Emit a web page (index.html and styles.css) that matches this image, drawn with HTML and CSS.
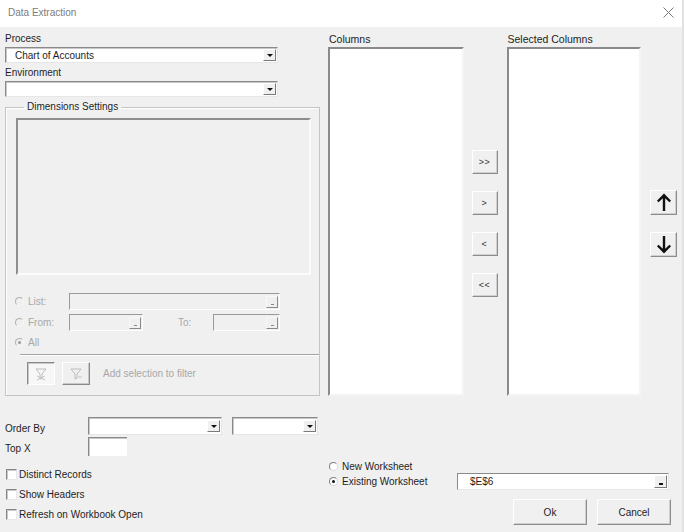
FILE: index.html
```html
<!DOCTYPE html>
<html lang="en">
<head>
    <meta charset="UTF-8">
    <title>Data Extraction</title>
    <link rel="stylesheet" href="styles.css">
</head>
<body>
<div class="window">
    <div class="titlebar">
        <span class="title">Data Extraction</span>
        <svg class="close" width="11" height="11" viewBox="0 0 11 11"><path d="M0.5 0.5 L10.5 10.5 M10.5 0.5 L0.5 10.5" stroke="#7a7a7a" stroke-width="1" fill="none"/></svg>
    </div>

    <div class="content">
        <div class="top">
            <div class="left">
                <div class="lbl">Process</div>
                <div class="combo"><span class="value">Chart of Accounts</span><span class="drop"><i></i></span></div>
                <div class="lbl lbl-env">Environment</div>
                <div class="combo"><span class="value"></span><span class="drop"><i></i></span></div>

                <fieldset class="dims">
                    <legend>Dimensions Settings</legend>
                    <div class="dim-list"></div>

                    <div class="dim-row row-list">
                        <span class="opt"><span class="radio off"></span>List:</span>
                        <span class="dbox box-list"><span class="dots"></span></span>
                    </div>
                    <div class="dim-row row-from">
                        <span class="opt"><span class="radio off"></span>From:</span>
                        <span class="dbox box-from"><span class="dots"></span></span>
                        <span class="to-lbl">To:</span>
                        <span class="dbox box-to"><span class="dots"></span></span>
                    </div>
                    <div class="dim-row row-all">
                        <span class="opt"><span class="radio off on"></span>All</span>
                    </div>

                    <div class="sep"></div>

                    <div class="filter-row">
                        <span class="fbtn pressed">
                            <svg width="14" height="14" viewBox="0 0 14 14"><path d="M2 2 H12 L8 7 V11 L6 12 V7 Z" fill="none" stroke="#bcbcbc" stroke-width="1"/><path d="M3 9 L11 13 M3 13 L11 9" stroke="#c4c4c4" stroke-width="1"/></svg>
                        </span>
                        <span class="fbtn">
                            <svg width="14" height="14" viewBox="0 0 14 14"><path d="M2 2 H12 L8 7 V11 L6 12 V7 Z" fill="none" stroke="#bcbcbc" stroke-width="1"/><path d="M9 10 H13" stroke="#c4c4c4" stroke-width="1"/></svg>
                        </span>
                        <span class="filter-text">Add selection to filter</span>
                    </div>
                </fieldset>
            </div>

            <div class="col-box">
                <div class="col-title">Columns</div>
                <div class="listbox"></div>
            </div>

            <div class="move-btns">
                <span class="btn small">&gt;&gt;</span>
                <span class="btn small">&gt;</span>
                <span class="btn small">&lt;</span>
                <span class="btn small">&lt;&lt;</span>
            </div>

            <div class="col-box sel">
                <div class="col-title">Selected Columns</div>
                <div class="listbox"></div>
            </div>

            <div class="order-btns">
                <span class="btn arrow">
                    <svg width="16" height="19" viewBox="0 0 16 19"><path d="M8 18 V2.5 M1.8 8.5 L8 2.3 L14.2 8.5" fill="none" stroke="#111" stroke-width="2.4"/></svg>
                </span>
                <span class="btn arrow">
                    <svg width="16" height="19" viewBox="0 0 16 19"><path d="M8 1 V16.5 M1.8 10.5 L8 16.7 L14.2 10.5" fill="none" stroke="#111" stroke-width="2.4"/></svg>
                </span>
            </div>
        </div>

        <div class="bottom">
            <div class="bottom-left">
                <div class="form-row">
                    <span class="row-lbl">Order By</span>
                    <div class="combo order1"><span class="value"></span><span class="drop"><i></i></span></div>
                    <div class="combo order2"><span class="value"></span><span class="drop"><i></i></span></div>
                </div>
                <div class="form-row topx-row">
                    <span class="row-lbl">Top X</span>
                    <span class="topx"></span>
                </div>
                <div class="checks">
                    <div class="check-row"><span class="checkbox"></span>Distinct Records</div>
                    <div class="check-row"><span class="checkbox"></span>Show Headers</div>
                    <div class="check-row"><span class="checkbox"></span>Refresh on Workbook Open</div>
                </div>
            </div>

            <div class="bottom-right">
                <div class="ws-row"><span class="radio"></span>New Worksheet</div>
                <div class="ws-row existing">
                    <span class="ws-opt"><span class="radio on"></span>Existing Worksheet</span>
                    <span class="refbox"><span class="value">$E$6</span><span class="refbtn"><i></i></span></span>
                </div>
                <div class="actions">
                    <span class="btn big">Ok</span>
                    <span class="btn big">Cancel</span>
                </div>
            </div>
        </div>
    </div>
</div>
</body>
</html>
```

FILE: styles.css
```css
* {
    box-sizing: border-box;
}
body {
    margin: 0;
    font-family: "Liberation Sans", Arial, sans-serif;
    font-size: 10px;
    color: #1e1e1e;
    background-color: #fff;
}
.window {
    width: 684px;
    height: 532px;
    background-color: #f0f0f0;
    border-right: 2px solid #e2e2e2;
}
.titlebar {
    height: 27px;
    background-color: #fff;
    display: flex;
    align-items: center;
    justify-content: space-between;
    padding: 0 8px 2px 8px;
}
.title {
    font-size: 10px;
    color: #7c7c7c;
}
.content {
    padding: 0 5px;
}
.top {
    display: flex;
    align-items: flex-start;
    padding-top: 6px;
}

/* left column */
.left {
    width: 315px;
}
.lbl {
    height: 14px;
    line-height: 12px;
}
.lbl-env {
    height: 18px;
    line-height: 19px;
}
.combo {
    display: flex;
    align-items: center;
    height: 16px;
    background-color: #fff;
    border: 1px solid;
    border-color: #8a8a8a #e6e6e6 #e6e6e6 #8a8a8a;
    box-shadow: inset 1px 1px 0 #c8c8c8;
    width: 273px;
}
.combo .value {
    flex: 1;
    padding-left: 9px;
}
.drop {
    width: 13px;
    height: 12px;
    margin-right: 1px;
    background-color: #f0f0f0;
    border: 1px solid;
    border-color: #fff #7a7a7a #7a7a7a #fff;
    display: flex;
    align-items: center;
    justify-content: center;
}
.drop i {
    width: 0;
    height: 0;
    border-left: 3px solid transparent;
    border-right: 3px solid transparent;
    border-top: 3px solid #111;
}

.dims {
    margin: 4px 0 0 0;
    padding: 5px 0 10px 10px;
    width: 315px;
    border: 1px solid #c4c4c4;
    box-shadow: inset 1px 1px 0 #fff;
    min-width: 0;
}
.dims legend {
    margin-left: 8px;
    padding: 0 3px;
    line-height: 12px;
}
.dim-list {
    width: 295px;
    height: 157px;
    background-color: #f0f0f0;
    border: 2px solid;
    border-color: #8e8e8e #fbfbfb #fbfbfb #8e8e8e;
}
.dim-row {
    display: flex;
    align-items: center;
    color: #a8a8a8;
}
.row-list {
    margin-top: 18px;
}
.row-from {
    margin-top: 4px;
}
.row-all {
    margin-top: 5px;
    height: 12px;
}
.opt {
    width: 53px;
    display: flex;
    align-items: center;
}
.dbox {
    height: 17px;
    border: 1px solid;
    border-color: #9a9a9a #fff #fff #9a9a9a;
    display: flex;
    justify-content: flex-end;
    align-items: flex-end;
    padding: 0 1px 1px 0;
}
.box-list {
    width: 211px;
}
.box-from {
    width: 74px;
}
.box-to {
    width: 67px;
}
.to-lbl {
    width: 70px;
    padding-left: 35px;
}
.dots {
    width: 12px;
    height: 12px;
    border: 1px solid;
    border-color: #f8f8f8 #8a8a8a #8a8a8a #f8f8f8;
    position: relative;
}
.dots::after {
    content: "";
    position: absolute;
    left: 4px;
    bottom: 2px;
    width: 3px;
    height: 1px;
    background-color: #888;
}
.sep {
    margin: 6px 0 0 4px;
    width: 299px;
    height: 2px;
    border-top: 1px solid #a4a4a4;
    border-bottom: 1px solid #fff;
}
.filter-row {
    display: flex;
    align-items: center;
    margin: 6px 0 0 11px;
}
.fbtn {
    width: 28px;
    height: 23px;
    margin-right: 7px;
    display: flex;
    align-items: center;
    justify-content: center;
    border: 1px solid;
    border-color: #fff #8a8a8a #8a8a8a #fff;
    box-shadow: inset -1px -1px 0 #c8c8c8;
}
.fbtn.pressed {
    border-color: #8a8a8a #fff #fff #8a8a8a;
    box-shadow: inset 1px 1px 0 #c8c8c8;
    background-color: #f7f7f7;
}
.filter-text {
    margin-left: 6px;
    color: #a8a8a8;
}

/* radios and checks */
.radio {
    width: 9px;
    height: 9px;
    border-radius: 50%;
    border: 1px solid;
    border-color: #808080 #dcdcdc #dcdcdc #808080;
    background-color: #fff;
    margin-right: 4px;
    display: inline-flex;
    align-items: center;
    justify-content: center;
    flex-shrink: 0;
}
.radio.on::after {
    content: "";
    width: 3px;
    height: 3px;
    border-radius: 50%;
    background-color: #111;
}
.radio.off {
    border-color: #b0b0b0 #f6f6f6 #f6f6f6 #b0b0b0;
    background-color: #f0f0f0;
    margin: 0 4px 0 -1px;
}
.radio.off.on::after {
    background-color: #9a9a9a;
}

/* list columns */
.col-box {
    width: 136px;
    margin-left: 8px;
}
.col-box.sel {
    width: 135px;
    margin-left: 9px;
}
.col-title {
    font-size: 10.5px;
    height: 14px;
    line-height: 12px;
    padding-left: 1px;
    color: #222;
}
.listbox {
    height: 349px;
    background-color: #fff;
    border: 2px solid;
    border-color: #8a8a8a #f4f4f4 #f4f4f4 #8a8a8a;
}
.move-btns {
    display: flex;
    flex-direction: column;
    gap: 17px;
    margin: 117px 0 0 8px;
}
.order-btns {
    display: flex;
    flex-direction: column;
    gap: 17px;
    margin: 157px 0 0 9px;
}
.btn {
    display: flex;
    align-items: center;
    justify-content: center;
    background-color: #f0f0f0;
    border: 1px solid;
    border-color: #fff #8c8c8c #8c8c8c #fff;
    box-shadow: inset -1px -1px 0 #d0d0d0;
}
.btn.small {
    width: 26px;
    height: 24px;
    font-size: 9px;
    color: #333;
    letter-spacing: 0.5px;
}
.btn.arrow {
    width: 27px;
    height: 25px;
}
.btn.big {
    width: 74px;
    height: 26px;
}

/* bottom */
.bottom {
    display: flex;
    align-items: flex-start;
    margin-top: 21px;
}
.bottom-left {
    width: 324px;
}
.form-row {
    display: flex;
    align-items: center;
    height: 18px;
}
.row-lbl {
    width: 83px;
    padding-top: 4px;
}
.combo.order1 {
    width: 134px;
    height: 18px;
    margin-right: 10px;
}
.combo.order2 {
    width: 86px;
    height: 18px;
}
.topx-row {
    margin-top: 2px;
    height: 19px;
}
.topx {
    width: 39px;
    height: 19px;
    background-color: #fff;
    border-top: 1px solid #8a8a8a;
    border-left: 1px solid #8a8a8a;
    box-shadow: inset 1px 1px 0 #c8c8c8;
}
.checks {
    margin-top: 8px;
}
.check-row {
    display: flex;
    align-items: center;
    height: 20px;
    padding-left: 1px;
}
.checkbox {
    width: 11px;
    height: 11px;
    margin-right: 2px;
    background-color: #fff;
    border: 1px solid;
    border-color: #858585 #e8e8e8 #e8e8e8 #858585;
    box-shadow: inset 1px 1px 0 #cacaca;
}
.bottom-right {
    margin-top: 42px;
}
.ws-row {
    display: flex;
    align-items: center;
    height: 15px;
}
.ws-opt {
    width: 128px;
    display: flex;
    align-items: center;
}
.refbox {
    width: 212px;
    height: 17px;
    display: flex;
    align-items: center;
    background-color: #fff;
    border: 1px solid;
    border-color: #8a8a8a #e6e6e6 #e6e6e6 #8a8a8a;
}
.refbox .value {
    flex: 1;
    padding-left: 12px;
}
.refbtn {
    width: 13px;
    height: 13px;
    margin-right: 1px;
    background-color: #f0f0f0;
    border: 1px solid;
    border-color: #fff #7a7a7a #7a7a7a #fff;
    display: flex;
    align-items: flex-end;
    justify-content: center;
    padding-bottom: 2px;
}
.refbtn i {
    width: 4px;
    height: 2px;
    background-color: #111;
}
.actions {
    display: flex;
    gap: 10px;
    margin: 10px 0 0 184px;
}
```
